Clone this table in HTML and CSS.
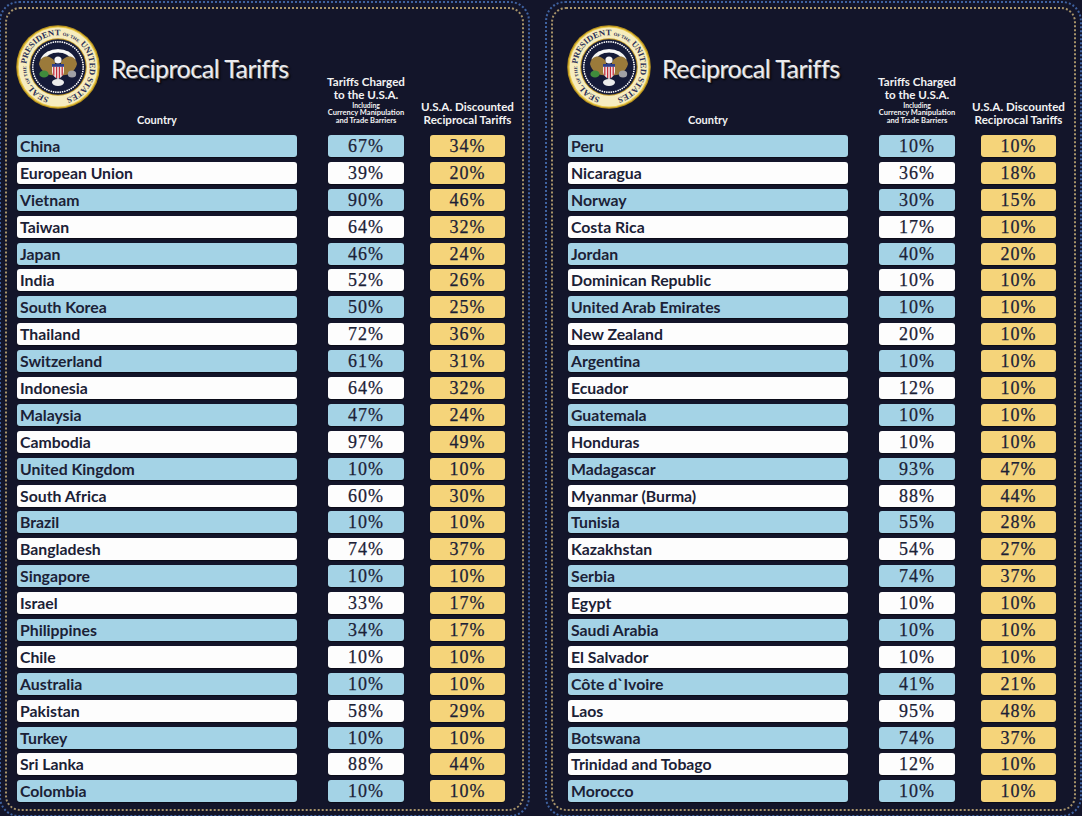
FILE: index.html
```html
<!DOCTYPE html>
<html lang="en">
<head>
<meta charset="utf-8">
<title>Reciprocal Tariffs</title>
<link rel="stylesheet" href="styles.css">
</head>
<body>
<svg class="defs" width="0" height="0" aria-hidden="true">
  <defs>
    <symbol id="seal" viewBox="-42 -42 84 84">
      <circle r="41.8" fill="#b8921f"/>
      <circle r="40.6" fill="#e9c94a"/>
      <circle r="39.4" fill="#f6ecbf"/>
      <circle r="28.8" fill="#c39a2a"/>
      <circle r="27.8" fill="#151a38"/>
      <circle r="25.2" fill="none" stroke="#ffffff" stroke-width="1.7" stroke-dasharray="0.01 2.3" stroke-linecap="round"/>
      <path id="sealarc" d="M-2,31.8 A31.8,31.8 0 1 1 2,31.8" fill="none"/>
      <text class="seal-text" font-family="Liberation Serif, serif" font-weight="bold" font-size="8.4" fill="#2b2f57">
        <textPath href="#sealarc" startOffset="7" textLength="182" lengthAdjust="spacingAndGlyphs">SEAL <tspan font-size="4.6">OF THE</tspan> PRESIDENT <tspan font-size="4.6">OF THE</tspan> UNITED STATES</textPath>
      </text>
      <path d="M-16,-7 A17,14 0 0 1 16,-7" fill="none" stroke="#f2f2f2" stroke-width="3.6"/>
      <path d="M-12,-9 A13,10 0 0 1 12,-9" fill="none" stroke="#dcdcdc" stroke-width="0.9" stroke-dasharray="0.6 1.6"/>
      <path d="M-11,-14 Q0,-18 11,-14" fill="none" stroke="#fafafa" stroke-width="2"/>
      <path d="M-19,-3 C-17,-13 -7,-12 -3,-5 L-3,8 C-10,9 -17,5 -19,-3Z" fill="#9b7a3a"/>
      <path d="M19,-3 C17,-13 7,-12 3,-5 L3,8 C10,9 17,5 19,-3Z" fill="#9b7a3a"/>
      <circle cx="0" cy="-7" r="3.6" fill="#f5f5f5"/>
      <path d="M-6,-3 H6 V4.5 C6,9.5 0,12 0,12 C0,12 -6,9.5 -6,4.5Z" fill="#f0e8e8"/>
      <path d="M-4.2,-0.5 V8.5 M-1.4,-0.5 V11 M1.4,-0.5 V11 M4.2,-0.5 V8.5" stroke="#c5303c" stroke-width="1.3"/>
      <rect x="-6" y="-3" width="12" height="2.8" fill="#2d3f8a"/>
      <ellipse cx="-14" cy="7" rx="4.6" ry="3.6" fill="#3f8c3c"/>
      <ellipse cx="14" cy="7" rx="4.2" ry="3.6" fill="#a0a0a6"/>
      <ellipse cx="0" cy="15.5" rx="6" ry="3.4" fill="#ececec"/>
    </symbol>
  </defs>
</svg>

<main class="page">
  <section class="panel panel-left">
    <div class="inner inner-left">
      <header class="head">
        <div class="head-country">
          <div class="brand">
            <svg class="seal" viewBox="0 0 84 84"><use href="#seal" x="0" y="0" width="84" height="84"/></svg>
            <h1 class="title">Reciprocal Tariffs</h1>
          </div>
          <div class="col-label">Country</div>
        </div>
        <div class="head-tariff">
          <div class="ht">
            <div class="ht-main">Tariffs Charged</div>
            <div class="ht-main">to the U.S.A.</div>
            <div class="ht-sub ht-tiny">Including</div>
            <div class="ht-sub">Currency Manipulation</div>
            <div class="ht-sub">and Trade Barriers</div>
          </div>
        </div>
        <div class="head-disc">
          <div class="hd">
            <div class="hd-line">U.S.A. Discounted</div>
            <div class="hd-line">Reciprocal Tariffs</div>
          </div>
        </div>
      </header>
      <div class="rows">
        <div class="row blue"><span class="c">China</span><span class="t">67%</span><span class="d">34%</span></div>
        <div class="row white"><span class="c">European Union</span><span class="t">39%</span><span class="d">20%</span></div>
        <div class="row blue"><span class="c">Vietnam</span><span class="t">90%</span><span class="d">46%</span></div>
        <div class="row white"><span class="c">Taiwan</span><span class="t">64%</span><span class="d">32%</span></div>
        <div class="row blue"><span class="c">Japan</span><span class="t">46%</span><span class="d">24%</span></div>
        <div class="row white"><span class="c">India</span><span class="t">52%</span><span class="d">26%</span></div>
        <div class="row blue"><span class="c">South Korea</span><span class="t">50%</span><span class="d">25%</span></div>
        <div class="row white"><span class="c">Thailand</span><span class="t">72%</span><span class="d">36%</span></div>
        <div class="row blue"><span class="c">Switzerland</span><span class="t">61%</span><span class="d">31%</span></div>
        <div class="row white"><span class="c">Indonesia</span><span class="t">64%</span><span class="d">32%</span></div>
        <div class="row blue"><span class="c">Malaysia</span><span class="t">47%</span><span class="d">24%</span></div>
        <div class="row white"><span class="c">Cambodia</span><span class="t">97%</span><span class="d">49%</span></div>
        <div class="row blue"><span class="c">United Kingdom</span><span class="t">10%</span><span class="d">10%</span></div>
        <div class="row white"><span class="c">South Africa</span><span class="t">60%</span><span class="d">30%</span></div>
        <div class="row blue"><span class="c">Brazil</span><span class="t">10%</span><span class="d">10%</span></div>
        <div class="row white"><span class="c">Bangladesh</span><span class="t">74%</span><span class="d">37%</span></div>
        <div class="row blue"><span class="c">Singapore</span><span class="t">10%</span><span class="d">10%</span></div>
        <div class="row white"><span class="c">Israel</span><span class="t">33%</span><span class="d">17%</span></div>
        <div class="row blue"><span class="c">Philippines</span><span class="t">34%</span><span class="d">17%</span></div>
        <div class="row white"><span class="c">Chile</span><span class="t">10%</span><span class="d">10%</span></div>
        <div class="row blue"><span class="c">Australia</span><span class="t">10%</span><span class="d">10%</span></div>
        <div class="row white"><span class="c">Pakistan</span><span class="t">58%</span><span class="d">29%</span></div>
        <div class="row blue"><span class="c">Turkey</span><span class="t">10%</span><span class="d">10%</span></div>
        <div class="row white"><span class="c">Sri Lanka</span><span class="t">88%</span><span class="d">44%</span></div>
        <div class="row blue"><span class="c">Colombia</span><span class="t">10%</span><span class="d">10%</span></div>
      </div>
    </div>
  </section>

  <section class="panel panel-right">
    <div class="inner inner-right">
      <header class="head">
        <div class="head-country">
          <div class="brand">
            <svg class="seal" viewBox="0 0 84 84"><use href="#seal" x="0" y="0" width="84" height="84"/></svg>
            <h1 class="title">Reciprocal Tariffs</h1>
          </div>
          <div class="col-label">Country</div>
        </div>
        <div class="head-tariff">
          <div class="ht">
            <div class="ht-main">Tariffs Charged</div>
            <div class="ht-main">to the U.S.A.</div>
            <div class="ht-sub ht-tiny">Including</div>
            <div class="ht-sub">Currency Manipulation</div>
            <div class="ht-sub">and Trade Barriers</div>
          </div>
        </div>
        <div class="head-disc">
          <div class="hd">
            <div class="hd-line">U.S.A. Discounted</div>
            <div class="hd-line">Reciprocal Tariffs</div>
          </div>
        </div>
      </header>
      <div class="rows">
        <div class="row blue"><span class="c">Peru</span><span class="t">10%</span><span class="d">10%</span></div>
        <div class="row white"><span class="c">Nicaragua</span><span class="t">36%</span><span class="d">18%</span></div>
        <div class="row blue"><span class="c">Norway</span><span class="t">30%</span><span class="d">15%</span></div>
        <div class="row white"><span class="c">Costa Rica</span><span class="t">17%</span><span class="d">10%</span></div>
        <div class="row blue"><span class="c">Jordan</span><span class="t">40%</span><span class="d">20%</span></div>
        <div class="row white"><span class="c">Dominican Republic</span><span class="t">10%</span><span class="d">10%</span></div>
        <div class="row blue"><span class="c">United Arab Emirates</span><span class="t">10%</span><span class="d">10%</span></div>
        <div class="row white"><span class="c">New Zealand</span><span class="t">20%</span><span class="d">10%</span></div>
        <div class="row blue"><span class="c">Argentina</span><span class="t">10%</span><span class="d">10%</span></div>
        <div class="row white"><span class="c">Ecuador</span><span class="t">12%</span><span class="d">10%</span></div>
        <div class="row blue"><span class="c">Guatemala</span><span class="t">10%</span><span class="d">10%</span></div>
        <div class="row white"><span class="c">Honduras</span><span class="t">10%</span><span class="d">10%</span></div>
        <div class="row blue"><span class="c">Madagascar</span><span class="t">93%</span><span class="d">47%</span></div>
        <div class="row white"><span class="c">Myanmar (Burma)</span><span class="t">88%</span><span class="d">44%</span></div>
        <div class="row blue"><span class="c">Tunisia</span><span class="t">55%</span><span class="d">28%</span></div>
        <div class="row white"><span class="c">Kazakhstan</span><span class="t">54%</span><span class="d">27%</span></div>
        <div class="row blue"><span class="c">Serbia</span><span class="t">74%</span><span class="d">37%</span></div>
        <div class="row white"><span class="c">Egypt</span><span class="t">10%</span><span class="d">10%</span></div>
        <div class="row blue"><span class="c">Saudi Arabia</span><span class="t">10%</span><span class="d">10%</span></div>
        <div class="row white"><span class="c">El Salvador</span><span class="t">10%</span><span class="d">10%</span></div>
        <div class="row blue"><span class="c">Côte d`Ivoire</span><span class="t">41%</span><span class="d">21%</span></div>
        <div class="row white"><span class="c">Laos</span><span class="t">95%</span><span class="d">48%</span></div>
        <div class="row blue"><span class="c">Botswana</span><span class="t">74%</span><span class="d">37%</span></div>
        <div class="row white"><span class="c">Trinidad and Tobago</span><span class="t">12%</span><span class="d">10%</span></div>
        <div class="row blue"><span class="c">Morocco</span><span class="t">10%</span><span class="d">10%</span></div>
      </div>
    </div>
  </section>
</main>
</body>
</html>
```

FILE: styles.css
```css
html, body {
  margin: 0;
  padding: 0;
  background: #13152a;
  overflow: hidden;
}

.defs {
  position: absolute;
  width: 0;
  height: 0;
  overflow: hidden;
}

.page {
  display: flex;
  gap: 15px;
  padding-top: 1px;
  margin-left: -1px;
  width: 1090px;
  height: 816px;
}

.panel {
  flex: none;
  box-sizing: border-box;
  height: 816px;
  border: 2px dotted #3f62a0;
  border-radius: 20px;
  padding: 4px;
}

.panel-left { width: 531px; }
.panel-right { width: 537px; }

.inner {
  box-sizing: border-box;
  height: 100%;
  border: 2px dotted #a8946a;
  border-radius: 15px;
  padding-top: 16px;
}

.inner-left { padding-left: 10px; }
.inner-right { padding-left: 15px; }

.head {
  display: flex;
  align-items: flex-end;
  height: 101px;
  margin-bottom: 9px;
}

.head-country {
  width: 280px;
  display: flex;
  flex-direction: column;
}

.brand {
  display: flex;
  align-items: center;
  gap: 11px;
  height: 84px;
}

.seal {
  width: 84px;
  height: 84px;
  flex: none;
  margin-left: -1px;
}

.title {
  margin: 0;
  font-family: Lato, "Open Sans", sans-serif;
  font-weight: 400;
  font-size: 25px;
  letter-spacing: -0.5px;
  color: #ececee;
  text-shadow: 1px 1px 0 #6d6d75, 2px 2px 2px #000;
  line-height: 30px;
  margin-top: 2px;
  white-space: nowrap;
}

.col-label {
  margin-top: 5px;
  text-align: center;
  font-family: Lato, sans-serif;
  font-weight: 700;
  font-size: 11px;
  line-height: 12px;
  color: #f2f2f2;
}

.head-tariff,
.head-disc {
  display: flex;
  justify-content: center;
}

.head-tariff { width: 76px; margin-left: 31px; }
.head-disc { width: 75px; margin-left: 26px; }

.ht, .hd {
  flex: none;
  width: max-content;
  text-align: center;
  font-family: Lato, sans-serif;
  font-weight: 700;
  color: #f2f2f2;
}

.ht-main {
  font-size: 11.6px;
  line-height: 13px;
}

.ht-sub {
  font-size: 7.5px;
  line-height: 8px;
}

.ht-tiny { font-size: 6.8px; }

.ht { padding-bottom: 1px; }

.hd-line {
  font-size: 11.6px;
  line-height: 13px;
}

.rows {
  display: flex;
  flex-direction: column;
  gap: 4.9px;
}

.row {
  display: flex;
  height: 22px;
}

.row span {
  box-sizing: border-box;
  height: 22px;
  border-radius: 3px;
  box-shadow: 0 1px 1px rgba(0, 0, 0, 0.45);
  color: #1b2136;
}

.c {
  width: 280px;
  padding-left: 3px;
  font-family: Lato, sans-serif;
  font-weight: 700;
  font-size: 15.8px;
  line-height: 22px;
  white-space: nowrap;
}

.t, .d {
  text-align: center;
  font-family: "Liberation Serif", "Times New Roman", serif;
  font-size: 18px;
  line-height: 23px;
  letter-spacing: 1px;
  -webkit-text-stroke: 0.25px #1b2136;
}

.t { width: 76px; margin-left: 31px; }
.d { width: 75px; margin-left: 26px; background: #f5d47a; }

.blue .c, .blue .t { background: #a4d3e6; }
.white .c, .white .t { background: #fdfdfd; }
```
